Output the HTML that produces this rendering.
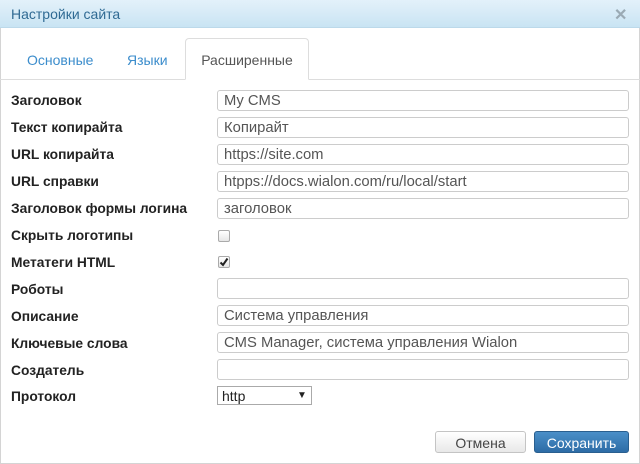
<!DOCTYPE html>
<html><head><meta charset="utf-8"><style>
*{box-sizing:border-box;margin:0;padding:0}
body{width:640px;height:464px;background:#fff;font-family:"Liberation Sans",Arial,sans-serif;font-size:13px;color:#333;position:relative;overflow:hidden}
.dlg{position:absolute;left:0;top:0;width:640px;height:464px;border:1px solid #d4d4d4;border-top:none}
.hdr{position:absolute;left:0;top:0;width:640px;height:28px;background:linear-gradient(#e3f1fa,#c9e4f3);border-bottom:1px solid #bcd9ea}
.hdr .t{position:absolute;left:11px;top:6px;font-size:14px;color:#2f6a93}
.hdr .x{position:absolute;left:614px;top:5px;font-size:16px;color:#9aaab4;font-weight:bold}
.tabline{position:absolute;left:0;top:79px;width:640px;height:1px;background:#ddd}
.tab{position:absolute;top:52px;font-size:14px;color:#3c8dcc}
.atab{position:absolute;left:185px;top:38px;width:124px;height:42px;border:1px solid #ddd;border-bottom:1px solid #fff;border-radius:4px 4px 0 0;background:#fff;color:#555;font-size:14px;text-align:center;padding-top:13px}
.lbl{position:absolute;left:11px;font-weight:bold;font-size:13.8px;color:#222}
.inp{position:absolute;left:217px;width:412px;height:21px;border:1px solid #ccc;border-radius:3px;padding:3px 0 0 6px;font-size:14.8px;line-height:15px;color:#555;white-space:nowrap}
.cb{position:absolute;left:218px;width:12px;height:12px;border:1px solid #aaa;border-radius:2px;background:linear-gradient(#fff,#e6e6e6)}
.sel{position:absolute;left:217px;top:386px;width:95px;height:19px;border:1px solid #aaa;font-size:14px;padding:1px 0 0 4px;color:#222}
.btn{position:absolute;top:431px;height:22px;border-radius:3px;font-size:14px;text-align:center;padding-top:3px}
</style></head><body>
<div class="dlg"></div>
<div class="hdr"><span class="t">Настройки сайта</span><span class="x">✕</span></div>
<div class="tabline"></div>
<span class="tab" style="left:27px">Основные</span>
<span class="tab" style="left:127px">Языки</span>
<div class="atab">Расширенные</div>

<div class="lbl" style="top:93px">Заголовок</div><div class="inp" style="top:90px">My CMS</div>
<div class="lbl" style="top:120px">Текст копирайта</div><div class="inp" style="top:117px">Копирайт</div>
<div class="lbl" style="top:147px">URL копирайта</div><div class="inp" style="top:144px">https://site.com</div>
<div class="lbl" style="top:174px">URL справки</div><div class="inp" style="top:171px">htpps://docs.wialon.com/ru/local/start</div>
<div class="lbl" style="top:201px">Заголовок формы логина</div><div class="inp" style="top:198px">заголовок</div>
<div class="lbl" style="top:228px">Скрыть логотипы</div><div class="cb" style="top:230px"></div>
<div class="lbl" style="top:255px">Метатеги HTML</div><div class="cb" style="top:256px"><svg width="10" height="10" style="position:absolute;left:0;top:0"><path d="M1.5 5.5L4 8L8.5 1.5" stroke="#222" stroke-width="2" fill="none"/></svg></div>
<div class="lbl" style="top:282px">Роботы</div><div class="inp" style="top:278px"></div>
<div class="lbl" style="top:309px">Описание</div><div class="inp" style="top:305px">Система управления</div>
<div class="lbl" style="top:336px">Ключевые слова</div><div class="inp" style="top:332px">CMS Manager, система управления Wialon</div>
<div class="lbl" style="top:363px">Создатель</div><div class="inp" style="top:359px"></div>
<div class="lbl" style="top:389px">Протокол</div>
<div class="sel">http<span style="position:absolute;left:79px;top:3px;font-size:10px">▼</span></div>

<div class="btn" style="left:435px;width:91px;border:1px solid #c4c4c4;background:linear-gradient(#fff,#e8e8e8);color:#444">Отмена</div>
<div class="btn" style="left:534px;width:95px;border:1px solid #2a5f8f;background:linear-gradient(#4a8fc8,#2d6ca6);color:#fff">Сохранить</div>
</body></html>
